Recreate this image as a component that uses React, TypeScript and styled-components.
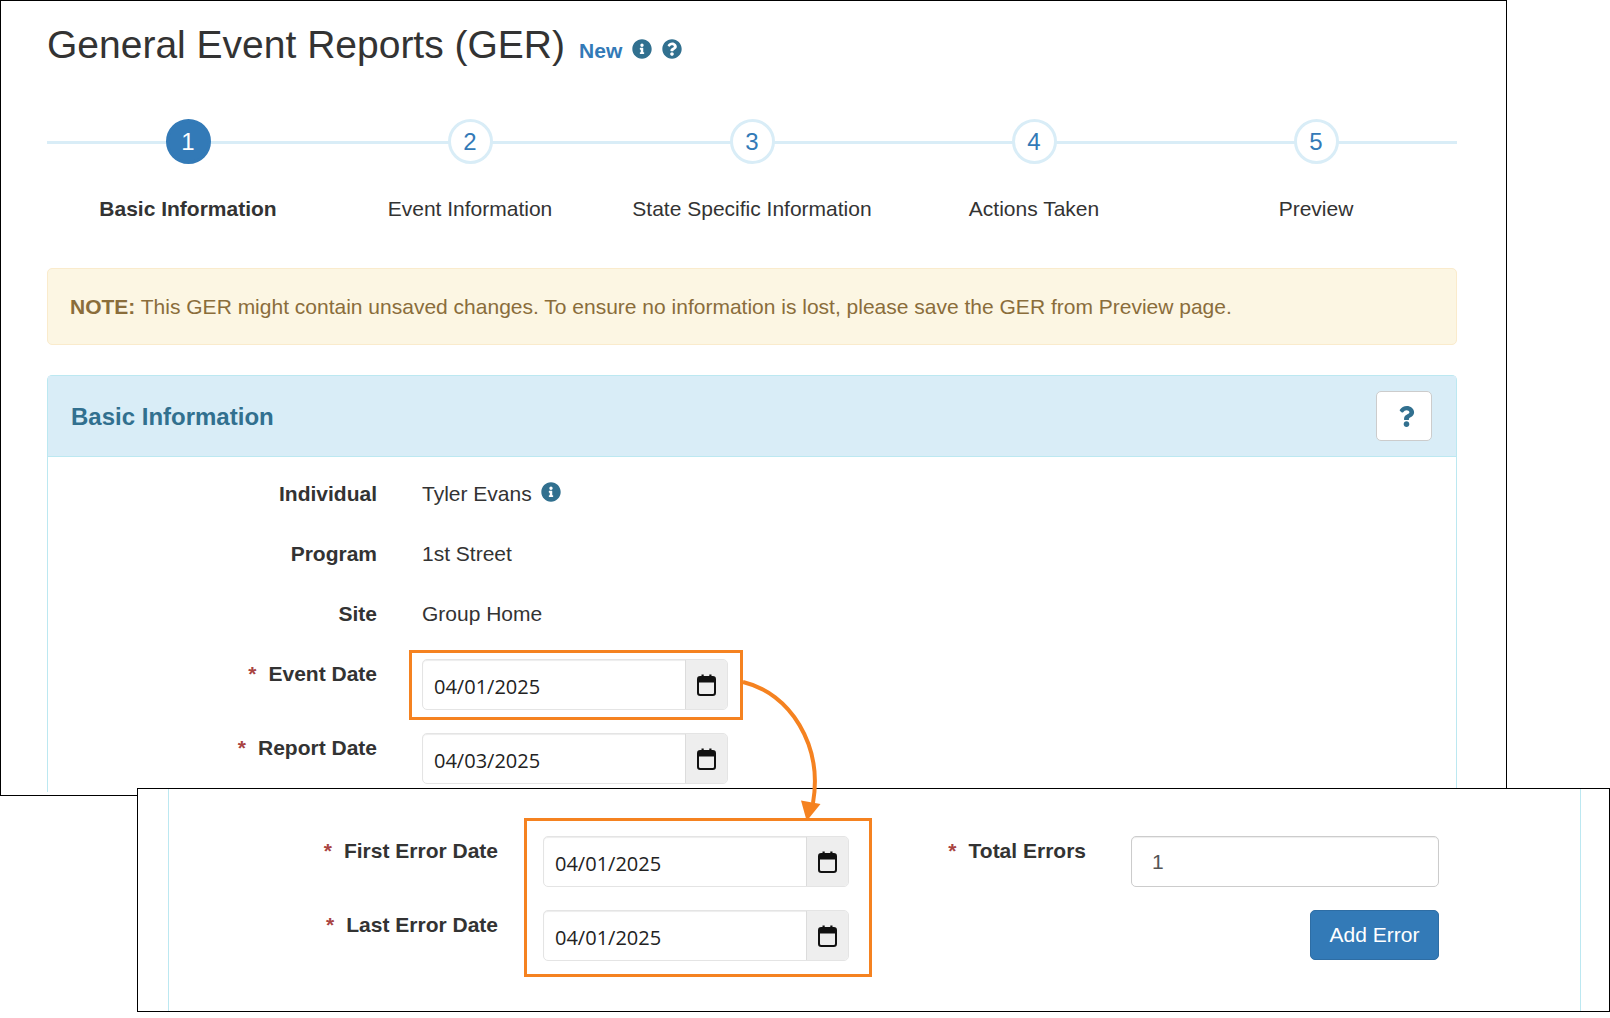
import React from "react";
import styled, { createGlobalStyle } from "styled-components";
import { FaInfoCircle, FaQuestion, FaQuestionCircle } from "react-icons/fa";

const GlobalStyle = createGlobalStyle`
  html, body {
    margin: 0;
    padding: 0;
    background: #fff;
  }
  body {
    font-family: "Liberation Sans", Arial, sans-serif;
    font-size: 21px;
    color: #333;
  }
`;

const Stage = styled.div`
  position: relative;
  width: 1610px;
  height: 1018px;
  overflow: hidden;
  background: #fff;
`;

const ReportWindow = styled.div`
  box-sizing: border-box;
  width: 1507px;
  height: 796px;
  padding: 0 49px 0 46px;
  border: 1px solid #000;
  overflow: hidden;
  background: #fff;
`;

const TitleRow = styled.div`
  display: flex;
  align-items: center;
  height: 86px;
  margin-bottom: 32px;
`;

const Title = styled.h1`
  margin: 0;
  font-size: 39px;
  font-weight: 400;
  line-height: 1;
  color: #333;
`;

const NewTag = styled.a`
  margin: 13px 10px 0 14px;
  font-size: 21px;
  font-weight: 700;
  color: #337ab7;
`;

const HelpIcon = styled.span`
  display: inline-flex;
  margin: ${({ $top }: { $top?: number }) => $top ?? 0}px 10px 0 0;
  font-size: 20px;
  color: #31708f;
`;

const Stepper = styled.div`
  display: grid;
  grid-template-columns: repeat(5, 1fr);
  background: linear-gradient(#d9edf7, #d9edf7) 0 22px / 100% 3px no-repeat;
`;

const Step = styled.div`
  display: flex;
  flex-direction: column;
  align-items: center;
`;

const StepCircle = styled.div<{ $active?: boolean }>`
  box-sizing: border-box;
  display: flex;
  align-items: center;
  justify-content: center;
  width: 45px;
  height: 45px;
  padding-top: 1px;
  border: 3px solid ${({ $active }) => ($active ? "#337ab7" : "#d9edf7")};
  border-radius: 50%;
  background: ${({ $active }) => ($active ? "#337ab7" : "#fff")};
  color: ${({ $active }) => ($active ? "#fff" : "#337ab7")};
  font-size: 24px;
`;

const StepLabel = styled.div<{ $active?: boolean }>`
  margin-top: 30px;
  line-height: 30px;
  font-weight: ${({ $active }) => ($active ? 700 : 400)};
  white-space: nowrap;
`;

const Note = styled.div`
  box-sizing: border-box;
  display: flex;
  align-items: center;
  height: 77px;
  margin: 44px 0 30px;
  padding: 0 22px;
  border: 1px solid #faebcc;
  border-radius: 5px;
  background: #fcf6e3;
  color: #8a6d3b;
  white-space: pre;
`;

const Panel = styled.section`
  border: 1px solid #bce8f1;
  border-bottom: 0;
  border-radius: 5px 5px 0 0;
`;

const PanelHeading = styled.div`
  box-sizing: border-box;
  display: flex;
  align-items: center;
  justify-content: space-between;
  height: 81px;
  padding: 0 24px 0 23px;
  border-bottom: 1px solid #bce8f1;
  background: #d9edf7;
`;

const PanelTitle = styled.h2`
  margin: 2px 0 0;
  font-size: 24px;
  font-weight: 700;
  color: #31708f;
`;

const HelpButton = styled.button`
  box-sizing: border-box;
  display: flex;
  align-items: center;
  justify-content: center;
  width: 56px;
  height: 50px;
  padding: 0 0 0 5px;
  border: 1px solid #ccc;
  border-radius: 5px;
  background: #fff;
  color: #31708f;
  font-size: 21px;
`;

const FormGrid = styled.div<{ $labelWidth?: number; $controlWidth?: number }>`
  display: grid;
  grid-template-columns: ${({ $labelWidth }) => $labelWidth ?? 329}px ${({ $controlWidth }) => $controlWidth ?? 306}px;
  grid-auto-rows: minmax(60px, auto);
  column-gap: 45px;
  align-items: start;
  align-content: start;
`;

const ReportForm = styled(FormGrid)`
  padding-top: 7px;
  grid-template-columns: 329px 1fr;
`;

const FieldLabel = styled.label`
  grid-column: 1;
  font-weight: 700;
  line-height: 60px;
  text-align: right;
  white-space: nowrap;
`;

const Required = styled.span`
  margin-right: 12px;
  color: #a94442;
`;

const FieldValue = styled.div`
  grid-column: 2;
  display: flex;
  align-items: center;
  gap: 9px;
  line-height: 60px;
`;

const ValueIcon = styled.span`
  display: inline-flex;
  margin-top: -4px;
  font-size: 20px;
  color: #31708f;
`;

const Control = styled.div`
  grid-column: 2;
  display: flex;
  box-sizing: border-box;
  width: 306px;
  height: 51px;
  margin: 15px 0 8px;
  border: 1px solid #e4e4e4;
  border-radius: 5px;
  box-shadow: inset 0 1px 1px rgba(0, 0, 0, 0.075);
`;

const DateInput = styled.input`
  flex: 1;
  min-width: 0;
  padding: 3px 0 0 11px;
  border: 0;
  background: transparent;
  font-family: "Open Sans", "Liberation Sans", sans-serif;
  font-size: 20px;
  color: #222;
  outline: none;
`;

const CalendarAddon = styled.span`
  display: flex;
  align-items: center;
  justify-content: center;
  width: 41px;
  border-left: 1px solid #dcdcdc;
  border-radius: 0 4px 4px 0;
  background: #eee;
`;

const Highlight = styled.div<{ $inset: string; $span?: number }>`
  grid-column: 2;
  grid-row: span ${({ $span }) => $span ?? 1};
  display: flex;
  flex-direction: column;
  position: relative;
  width: 306px;

  &::after {
    content: "";
    position: absolute;
    inset: ${({ $inset }) => $inset};
    border: 3px solid #f58220;
    pointer-events: none;
  }
`;

const ErrorsWindow = styled.div`
  position: absolute;
  left: 137px;
  top: 788px;
  box-sizing: border-box;
  width: 1473px;
  height: 224px;
  padding: 0 28px 0 30px;
  border: 1px solid #000;
  background: #fff;
`;

const ErrorsBody = styled.div`
  display: flex;
  height: 100%;
  padding-top: 32px;
  box-sizing: border-box;
  border: solid #bce8f1;
  border-width: 0 1px;
`;

const TextInput = styled.input`
  grid-column: 2;
  box-sizing: border-box;
  width: 308px;
  height: 51px;
  margin: 15px 0 8px;
  padding: 0 20px;
  border: 1px solid #ccc;
  border-radius: 5px;
  font-family: "Liberation Sans", Arial, sans-serif;
  font-size: 21px;
  color: #555;
  box-shadow: inset 0 1px 1px rgba(0, 0, 0, 0.075);
  outline: none;
`;

const ActionCell = styled.div`
  grid-column: 2;
  display: flex;
  justify-content: flex-end;
  padding-top: 15px;
`;

const PrimaryButton = styled.button`
  box-sizing: border-box;
  width: 129px;
  height: 50px;
  border: 1px solid #2e6da4;
  border-radius: 5px;
  background: #337ab7;
  color: #fff;
  font-family: "Liberation Sans", Arial, sans-serif;
  font-size: 21px;
`;

const ArrowOverlay = styled.svg`
  position: absolute;
  left: 0;
  top: 0;
  width: 1610px;
  height: 1018px;
  pointer-events: none;
`;

const steps = [
  "Basic Information",
  "Event Information",
  "State Specific Information",
  "Actions Taken",
  "Preview",
];

const CalendarIcon = () => (
  <svg width="19" height="22" viewBox="0 0 19 22">
    <path d="M4.5 0.5h2.2v4h-2.2zM12.3 0.5h2.2v4h-2.2z" fill="#111" />
    <rect x="1" y="3" width="17" height="18" rx="2.2" fill="none" stroke="#111" strokeWidth="2" />
    <rect x="1" y="3" width="17" height="5.5" fill="#111" />
  </svg>
);

const DateField = ({ value }: { value: string }) => (
  <Control>
    <DateInput defaultValue={value} readOnly />
    <CalendarAddon>
      <CalendarIcon />
    </CalendarAddon>
  </Control>
);

const App = () => {
  return (
    <Stage>
      <GlobalStyle />
      <ReportWindow>
        <TitleRow>
          <Title>General Event Reports (GER)</Title>
          <NewTag>New</NewTag>
          <HelpIcon $top={10}>
            <FaInfoCircle />
          </HelpIcon>
          <HelpIcon $top={10}>
            <FaQuestionCircle />
          </HelpIcon>
        </TitleRow>

        <Stepper>
          {steps.map((label, i) => (
            <Step key={label}>
              <StepCircle $active={i === 0}>{i + 1}</StepCircle>
              <StepLabel $active={i === 0}>{label}</StepLabel>
            </Step>
          ))}
        </Stepper>

        <Note>
          <b>NOTE:</b> This GER might contain unsaved changes. To ensure no information is lost, please save the GER from Preview page.
        </Note>

        <Panel>
          <PanelHeading>
            <PanelTitle>Basic Information</PanelTitle>
            <HelpButton>
              <FaQuestion />
            </HelpButton>
          </PanelHeading>
          <ReportForm>
            <FieldLabel>Individual</FieldLabel>
            <FieldValue>
              Tyler Evans
              <ValueIcon>
                <FaInfoCircle />
              </ValueIcon>
            </FieldValue>
            <FieldLabel>Program</FieldLabel>
            <FieldValue>1st Street</FieldValue>
            <FieldLabel>Site</FieldLabel>
            <FieldValue>Group Home</FieldValue>
            <FieldLabel>
              <Required>*</Required>Event Date
            </FieldLabel>
            <Highlight $inset="6px -15px -2px -13px">
              <DateField value="04/01/2025" />
            </Highlight>
            <FieldLabel>
              <Required>*</Required>Report Date
            </FieldLabel>
            <DateField value="04/03/2025" />
          </ReportForm>
        </Panel>
      </ReportWindow>

      <ErrorsWindow>
        <ErrorsBody>
          <FormGrid>
            <FieldLabel>
              <Required>*</Required>First Error Date
            </FieldLabel>
            <Highlight $span={2} $inset="-3px -23px -8px -19px">
              <DateField value="04/01/2025" />
              <DateField value="04/01/2025" />
            </Highlight>
            <FieldLabel>
              <Required>*</Required>Last Error Date
            </FieldLabel>
          </FormGrid>
          <FormGrid $labelWidth={237} $controlWidth={308}>
            <FieldLabel>
              <Required>*</Required>Total Errors
            </FieldLabel>
            <TextInput defaultValue="1" readOnly />
            <ActionCell>
              <PrimaryButton>Add Error</PrimaryButton>
            </ActionCell>
          </FormGrid>
        </ErrorsBody>
      </ErrorsWindow>

      <ArrowOverlay viewBox="0 0 1610 1018">
        <path d="M743 682C790 693 823 745 813 803" fill="none" stroke="#f58220" strokeWidth="4" />
        <path d="M801 800.5L820.5 804L806.7 821Z" fill="#f58220" />
      </ArrowOverlay>
    </Stage>
  );
};

export default App;
